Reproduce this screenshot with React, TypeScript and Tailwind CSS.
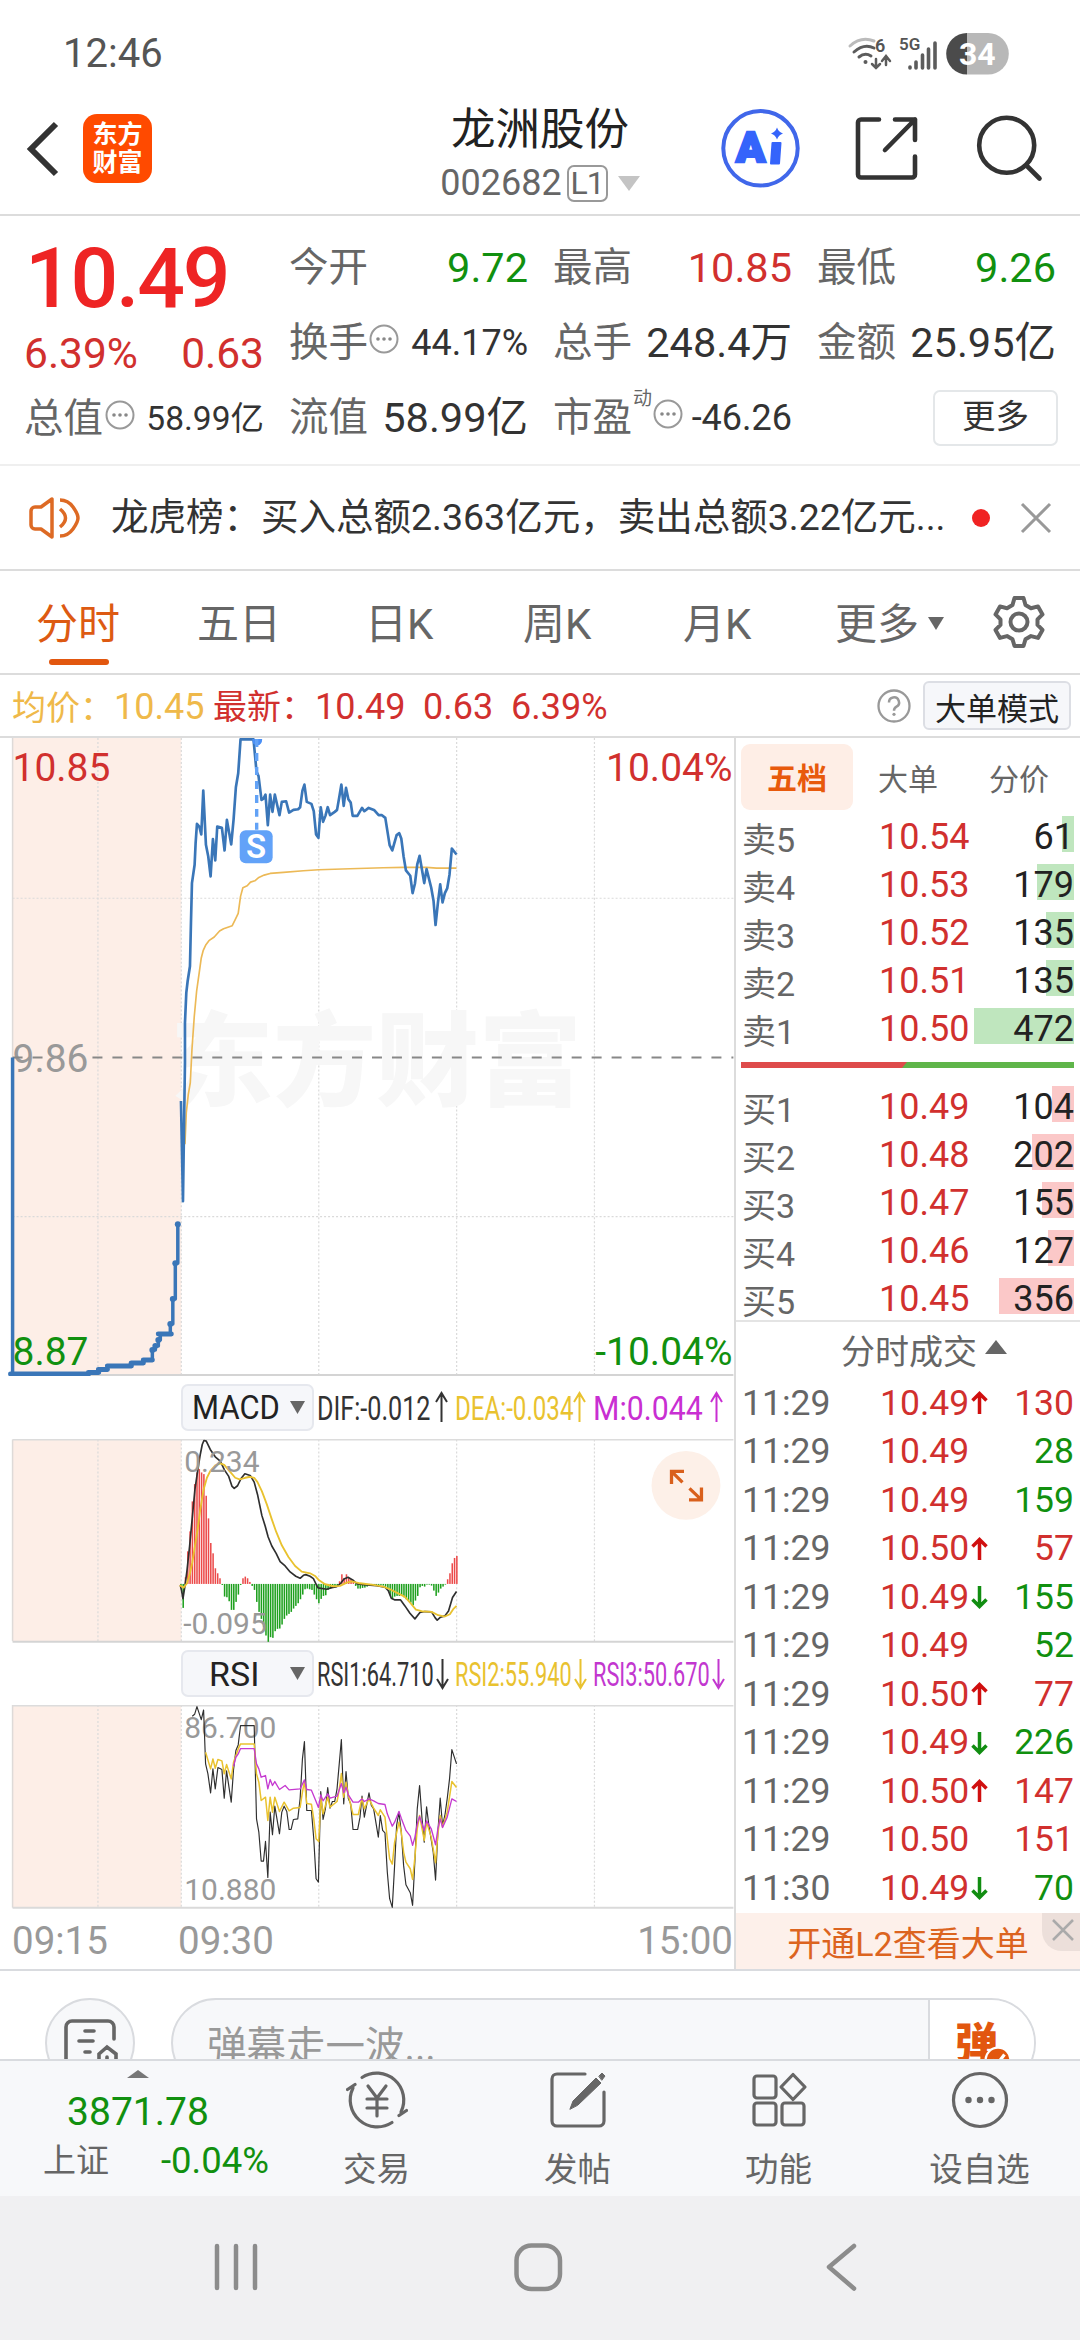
import { clsx } from "clsx";

const RED = "text-[#d1302e]";
const GREEN = "text-[#11900f]";

const stats = [
  { label: "今开", value: "9.72", color: GREEN },
  { label: "最高", value: "10.85", color: RED },
  { label: "最低", value: "9.26", color: GREEN },
  { label: "换手", value: "44.17%", tip: true, small: true },
  { label: "总手", value: "248.4万" },
  { label: "金额", value: "25.95亿" },
  { label: "流值", value: "58.99亿" },
  { label: "市盈", value: "-46.26", sup: "动", tip: true, small: true },
];

const sells = [
  { label: "卖5", price: "10.54", volume: 61, width: 12 },
  { label: "卖4", price: "10.53", volume: 179, width: 37 },
  { label: "卖3", price: "10.52", volume: 135, width: 28 },
  { label: "卖2", price: "10.51", volume: 135, width: 28 },
  { label: "卖1", price: "10.50", volume: 472, width: 100 },
];

const buys = [
  { label: "买1", price: "10.49", volume: 104, width: 22 },
  { label: "买2", price: "10.48", volume: 202, width: 42 },
  { label: "买3", price: "10.47", volume: 155, width: 32 },
  { label: "买4", price: "10.46", volume: 127, width: 26 },
  { label: "买5", price: "10.45", volume: 356, width: 75 },
];

const trades = [
  { time: "11:29", price: "10.49", dir: "up", volume: 130, buy: true },
  { time: "11:29", price: "10.49", dir: "", volume: 28, buy: false },
  { time: "11:29", price: "10.49", dir: "", volume: 159, buy: false },
  { time: "11:29", price: "10.50", dir: "up", volume: 57, buy: true },
  { time: "11:29", price: "10.49", dir: "down", volume: 155, buy: false },
  { time: "11:29", price: "10.49", dir: "", volume: 52, buy: false },
  { time: "11:29", price: "10.50", dir: "up", volume: 77, buy: true },
  { time: "11:29", price: "10.49", dir: "down", volume: 226, buy: false },
  { time: "11:29", price: "10.50", dir: "up", volume: 147, buy: true },
  { time: "11:29", price: "10.50", dir: "", volume: 151, buy: true },
  { time: "11:30", price: "10.49", dir: "down", volume: 70, buy: false },
];

// one bar per minute, 09:30 - 11:30
const macdBars = [
  -6, -72, 20, 98, 158, 248, 300, 335, 345, 335, 330, 265, 197, 123, 92, 47, 32, 17, -3, -38,
  -40, -52, -78, -78, -54, -32, -3, 17, 22, 17, 6, -6, -18, -54, -84, -105, -130, -155, -174, -160,
  -162, -142, -135, -134, -122, -105, -95, -90, -84, -74, -66, -58, -46, -32, -16, -14, -16, -18, -32, -46,
  -58, -45, -36, -34, -18, -14, -10, -10, -6, 8, 29, 18, 29, 18, 14, 6, -6, -14, -14, -12,
  -11, -8, -4, -3, -3, -3, -3, -3, -5, -8, -14, -34, -44, -38, -36, -36, -34, -40, -46, -50,
  -56, -64, -50, -36, -10, -6, -8, -2, -2, -5, -20, -36, -26, -14, -8, -2, 14, 32, 62, 78, 84,
];

const Tip = ({ className }: { className?: string }) => (
  <svg className={clsx("size-[30px] shrink-0", className)} viewBox="0 0 30 30">
    <circle cx="15" cy="15" r="13.5" fill="none" stroke="#999" strokeWidth="2" />
    <circle cx="9" cy="15" r="1.8" fill="#888" />
    <circle cx="15" cy="15" r="1.8" fill="#888" />
    <circle cx="21" cy="15" r="1.8" fill="#888" />
  </svg>
);

const LongArrow = ({ down }: { down?: boolean }) => (
  <svg className={clsx("h-[32px] w-[13px]", down && "rotate-180")} viewBox="0 0 13 32">
    <path d="M6.5 31V2M1 11L6.5 2L12 11" fill="none" stroke="currentColor" strokeWidth="2" />
  </svg>
);

const StatusBar = () => (
  <div className="flex h-[105px] items-start justify-between pl-[63px] pr-[71px] pt-[32px] text-[#555]">
    <span className="pt-px text-[40px] leading-[42px]">12:46</span>
    <svg className="h-[44px] w-[164px]" viewBox="845 31 164 44">
      <g fill="none" stroke="#5c5c5c" strokeWidth="3" strokeLinecap="round">
        <path d="M850 45q11-10 24-5" stroke="#bbb" />
        <path d="M854 51q10-9 20-4" />
        <path d="M859 56q6-5 12-1" />
        <path d="M876 58v9m-4-4l4 4l4-4M886 64v-8m-4 4l4-5l4 5" strokeWidth="2.5" />
        <path d="M910 66v1M916 61v6M922.500 54v13M928.500 48v19M935 42v25" strokeWidth="3.600" />
      </g>
      <circle cx="865.500" cy="61" r="2" fill="#5c5c5c" />
      <text x="875" y="51" fontSize="18" fontWeight="600" fill="#555">6</text>
      <text x="899" y="49" fontSize="17" fontWeight="600" fill="#555">5G</text>
      <path d="M967 32h21a20.800 20.800 0 0 1 0 41.600h-21z" fill="#b8b8b8" />
      <path d="M967 32a20.800 20.800 0 0 0 0 41.600z" fill="#4b4b4b" />
      <text x="959" y="64" fontSize="32" fontWeight="700" fill="#fff">34</text>
    </svg>
  </div>
);

const Header = () => (
  <div className="flex h-[111px] justify-between border-b-2 border-[#dcdcdc]">
    <div className="flex w-[370px] items-start pl-[26px] pt-[9px]">
      <svg className="mt-[7px] h-[56px] w-[34px]" viewBox="0 0 34 56">
        <path d="M30 3L5 28L30 53" fill="none" stroke="#333" strokeWidth="6" />
      </svg>
      <div className="ml-[23px] flex size-[69px] flex-col items-center justify-center rounded-[14px] bg-[#ff4a00] text-[25px] font-bold leading-[28px] text-white">
        <span>东方</span>
        <span>财富</span>
      </div>
    </div>
    <div className="flex flex-col items-center">
      <div className="text-[44.500px] leading-[50px] text-[#222]">龙洲股份</div>
      <div className="flex h-[56px] items-center text-[36px] text-[#666]">
        <span>002682</span>
        <span className="ml-[5px] flex h-[37px] w-[41px] items-center justify-center rounded-[7px] border-2 border-[#999] text-[32px] tracking-[-1px]">
          L1
        </span>
        <svg className="ml-[10px] h-[15px] w-[22px]" viewBox="0 0 22 15">
          <path d="M0 0h22L11 15z" fill="#c4c4c4" />
        </svg>
      </div>
    </div>
    <svg className="h-[90px] w-[370px]" viewBox="710 105 370 90">
      <circle cx="760.500" cy="148.300" r="37.200" fill="none" stroke="#4067ea" strokeWidth="4" />
      <text x="736" y="161.500" fontSize="43" fontWeight="900" fill="#3564fb" stroke="#3564fb" strokeWidth="2.500">A</text>
      <path d="M772.500 143h8l-1.500 20.500h-8z" fill="#3564fb" stroke="#3564fb" strokeWidth="2" strokeLinejoin="round" />
      <path d="M777 127.500q1.500 4.500 6 6q-4.500 1.500-6 6q-1.500-4.500-6-6q4.500-1.500 6-6z" fill="#3564fb" />
      <g fill="none" stroke="#333" strokeWidth="4.600" strokeLinecap="round" strokeLinejoin="round">
        <path d="M879 119.500h-18a3 3 0 0 0-3 3v52a3 3 0 0 0 3 3h51a3 3 0 0 0 3-3v-18" />
        <path d="M895 119.500h20v20.500M915 119.500L885 150" />
        <circle cx="1006.700" cy="145.300" r="27.500" />
        <path d="M1027 166l12.500 12.500" />
      </g>
    </svg>
  </div>
);

const Quote = () => (
  <div className="flex h-[250px] border-b-2 border-[#efefef] pl-[24px] pt-[14px] text-[#333]">
    <div className="flex w-[240px] flex-col">
      <div className="flex h-[97px] items-center pl-[1px] text-[84px] font-medium tracking-[-2.200px] text-[#ee2424]">
        10.49
      </div>
      <div className={clsx("flex h-[54px] items-center justify-between text-[42.500px]", RED)}>
        <span>6.39%</span>
        <span>0.63</span>
      </div>
      <div className="flex h-[75px] items-center">
        <span className="text-[39.500px] text-[#666]">总值</span>
        <Tip className="mb-[8px] ml-[2px]" />
        <span className="ml-auto text-[33.500px]">58.99亿</span>
      </div>
    </div>
    <div className="ml-[25px] grid h-[225px] w-[767px] grid-cols-[239px_239px_239px] grid-rows-3 gap-x-[25px]">
      {stats.map((s) => (
        <div key={s.label} className="flex items-center whitespace-nowrap">
          <span className="text-[39.500px] text-[#666]">{s.label}</span>
          {s.sup && <span className="mb-[38px] ml-[1px] w-[19px] text-[19px] text-[#666]">{s.sup}</span>}
          {s.tip && <Tip className="mb-[8px] ml-[1px]" />}
          <span className={clsx("ml-auto", s.small ? "text-[36px]" : "text-[41.500px]", s.color)}>
            {s.value}
          </span>
        </div>
      ))}
      <div className="flex items-center justify-end">
        <div className="mr-[-2px] flex h-[56px] w-[125px] items-center justify-center rounded-[7px] border-2 border-[#e4e7e9] pb-[2px] text-[33.500px]">
          更多
        </div>
      </div>
    </div>
  </div>
);

const News = () => (
  <div className="flex h-[105px] items-center border-b-2 border-[#dcdcdc] pl-[28px]">
    <svg className="h-[46px] w-[54px]" viewBox="28 494 54 46">
      <g fill="none" stroke="#dd6a24" strokeWidth="3.500" strokeLinejoin="round">
        <path d="M52 498v38L41 528h-6a4 4 0 0 1-4-4v-14a4 4 0 0 1 4-4h6z" />
        <path d="M60 508q11 9 0 18M60 499q8 0 13 7t5 11t-5 11t-13 7" />
      </g>
    </svg>
    <div className="ml-[29px] w-[837px] whitespace-nowrap pt-px text-[37.500px] text-[#333]">
      龙虎榜：买入总额2.363亿元，卖出总额3.22亿元...
    </div>
    <div className="ml-[24px] size-[18px] rounded-full bg-[#f02323]" />
    <svg className="ml-[30px] size-[32px]" viewBox="0 0 32 32">
      <path d="M2 2l28 28M30 2L2 30" stroke="#999" strokeWidth="3" />
    </svg>
  </div>
);

const Tabs = () => (
  <div className="flex h-[104px] items-center border-b-2 border-[#dcdcdc] pl-[36px] pt-[6px] text-[42px] text-[#666]">
    <div className="relative w-[161px] text-[#dd5a12]">
      分时
      <div className="absolute bottom-[-19px] left-[13px] h-[6px] w-[60px] rounded-full bg-[#e2570f]" />
    </div>
    <div className="w-[168px]">五日</div>
    <div className="w-[158px]">日K</div>
    <div className="w-[160px]">周K</div>
    <div className="w-[152px]">月K</div>
    <div>更多</div>
    <svg className="mb-[3px] ml-[9px] h-[13px] w-[16px]" viewBox="0 0 16 13">
      <path d="M0 0h16L8 13z" fill="#666" />
    </svg>
    <svg className="mb-[7px] ml-[48px] size-[54px]" viewBox="0 0 54 54">
      <g fill="none" stroke="#666" strokeWidth="4" strokeLinejoin="round">
        <path d="M22.500 3h9l2 7l5.500 3.200l7-1.800l4.500 8l-5 5v5.500l5 5l-4.500 8l-7-1.800l-5.500 3.200l-2 6.700h-9l-2-6.700l-5.500-3.200l-7 1.800l-4.500-8l5-5v-5.500l-5-5l4.500-8l7 1.800l5.500-3.200z" />
        <circle cx="27" cy="27" r="8.500" />
      </g>
    </svg>
  </div>
);

const PriceLegend = () => (
  <div className="flex h-[63px] items-center border-b-2 border-[#dcdcdc] pl-[12px] pr-[9px]">
    <span className="pt-[4px] text-[34px] text-[#efb94a]">均价：</span>
    <span className="w-[99px] pt-[3px] text-[36px] text-[#efb94a]">10.45</span>
    <div className={clsx("flex items-center pt-[3px]", RED)}>
      <span className="text-[34px]">最新：</span>
      <span className="w-[108px] text-[36px]">10.49</span>
      <span className="w-[88px] text-[36px]">0.63</span>
      <span className="text-[36px]">6.39%</span>
    </div>
    <svg className="ml-auto size-[34px]" viewBox="0 0 34 34">
      <circle cx="17" cy="17" r="15.500" fill="none" stroke="#999" strokeWidth="2.300" />
      <path d="M12 13.500a5 5 0 1 1 7.500 4.200q-2.500 1.500-2.500 4" fill="none" stroke="#999" strokeWidth="2.500" />
      <circle cx="17" cy="25.300" r="1.600" fill="#999" />
    </svg>
    <div className="ml-[12px] flex h-[49px] w-[148px] items-center justify-center rounded-[6px] border-2 border-[#dcdee4] bg-[#f6f7fa] pt-[7px] text-[31px] text-[#222]">
      大单模式
    </div>
  </div>
);

const Grid = ({ top, bottom }: { top: number; bottom: number }) => (
  <>
    <rect x="12" y={top} width="169" height={bottom - top} fill="#fdeee7" />
    {[97.5, 181, 318.7, 456.8, 594.8].map((x) => (
      <line key={x} x1={x} x2={x} y1={top} y2={bottom} stroke="#dadada" strokeWidth="1.2" strokeDasharray="2 2" />
    ))}
    <line x1="12" x2="12" y1={top} y2={bottom} stroke="#dedad8" strokeWidth="1.5" />
  </>
);

const PriceChart = () => (
  <svg className="block h-[639px] w-[734px]" viewBox="0 738 734 639">
    <Grid top={738} bottom={1376} />
    <text x="170" y="1099" fontSize="103" fontWeight="900" fill="#f7f7f7">东方财富</text>
    <path d="M12 898.500H734M12 1217.500H734" stroke="#dadada" strokeWidth="1.200" strokeDasharray="2 2" />
    <path d="M12 1376H734" stroke="#d4d4d4" strokeWidth="2" />
    <path d="M92 1058H734" stroke="#888" strokeWidth="2" strokeDasharray="10 10" />
    <text x="12" y="781" fontSize="39" fill="#d1302e">10.85</text>
    <text x="12" y="1073" fontSize="39" fill="#999">9.86</text>
    <text x="12" y="1366" fontSize="39" fill="#11900f">8.87</text>
    <text x="733" y="781" fontSize="39" fill="#d1302e" textAnchor="end">10.04%</text>
    <text x="733" y="1366" fontSize="39" fill="#11900f" textAnchor="end">-10.04%</text>
    <path d="M12 1058h10M32 1058h10" stroke="#888" strokeWidth="2" />
    <g fill="none" strokeLinejoin="round" transform="translate(170 730) scale(0.33333)">
      <polyline
        stroke="#ecb956"
        strokeWidth="5"
        points="44,1245 48,1150 54,1095 60,1060 65,960 72,860 79,785 86,735 93,685 99,662 107,645 116,633 132,622 148,604 160,597 186,588 195,570 204,551 211,500 218,474 231,468 241,457 254,453 266,443 282,436 300,431 340,428 400,423 446,420 540,417 640,414 700,413 770,413 800,415 860,415"
      />
      <polyline
        stroke="#3a76b8"
        strokeWidth="8"
        points="32,1115 38,1416 44,1000 44,880 48,790 52,755 59,710 62,580 65,460 73,405 76,340 80,282 87,290 93,314 99,182 107,345 114,380 121,440 128,328 135,392 141,290 155,294 163,362 170,270 183,344 190,270 197,172 204,130 211,28 250,28 259,125 265,138 274,210 280,206 286,194 293,286 300,194 307,246 314,194 328,256 335,216 348,214 357,248 370,240 384,238 390,232 397,182 403,164 410,216 424,222 431,244 438,314 445,324 452,232 459,276 466,258 473,232 480,256 494,246 501,240 508,200 514,164 521,228 528,174 535,208 542,218 548,258 562,258 576,234 583,244 596,234 612,240 626,256 636,256 646,264 659,346 667,362 680,316 688,310 694,326 701,380 708,422 721,438 728,490 735,462 742,404 749,378 763,460 770,418 784,474 791,514 797,586 804,520 811,464 818,518 825,490 832,476 839,434 846,356 860,374"
      />
    </g>
    <path
      fill="none"
      stroke="#3a76b8"
      strokeWidth="3.500"
      strokeLinejoin="round"
      d="M12 1058V1376H88V1373.500H99V1370.500H107V1367H130V1364H143V1361H152V1351H155V1347H158V1341H160V1335H170V1325H172.500V1300H175V1264H177.500V1225"
    />
    <path d="M10 1375H88M88 1373.500h10M98 1370.500h9M107 1367h24M131 1364h12M143 1361h9M158 1335h13" stroke="#3a76b8" strokeWidth="5" strokeLinecap="round" />
    {[[170, 1325], [172.5, 1300], [175, 1264], [177.5, 1225], [152, 1351], [155, 1347], [158, 1341]].map(([x, y]) => (
      <circle key={y} cx={x} cy={y} r="3" fill="#3a76b8" />
    ))}
    <path d="M252 739h10q0 6-5 6.500q-5-.5-5-6.500z" fill="#4a8ff5" />
    <path d="M256.500 739V830" stroke="#62a2f6" strokeWidth="3.400" strokeDasharray="8 6" />
    <rect x="239.500" y="830.500" width="33" height="33" rx="6" fill="#62a2f8" />
    <text x="256" y="858.500" fontSize="33" fontWeight="600" fill="#fff" textAnchor="middle">S</text>
  </svg>
);

const MacdChart = () => (
  <svg className="block h-[204px] w-[734px]" viewBox="0 1439.500 734 204">
    <Grid top={1440} bottom={1642} />
    <path d="M12 1440.300H734" stroke="#dcdcdc" strokeWidth="1.500" />
    <path d="M12 1642.500H734" stroke="#d4d4d4" strokeWidth="2" />
    <g transform="translate(170 1430) scale(0.33333)">
      {macdBars.map((v, i) => (
        <rect
          key={i}
          x={29.5 + i * 6.91}
          y={v > 0 ? 464 - v : 464}
          width="4.6"
          height={Math.abs(v)}
          fill={v > 0 ? "#ec4a4a" : "#1ea01e"}
        />
      ))}
      <g fill="none" strokeLinejoin="round">
        <polyline
          stroke="#2f2f2f"
          strokeWidth="5"
          points="30,468 34,485 38,508 44,470 50,425 58,350 66,265 74,180 82,125 90,75 96,45 101,33 108,35 120,60 135,82 150,95 163,122 175,140 185,170 192,177 202,169 212,148 224,133 240,138 252,158 262,195 275,258 285,290 294,323 305,350 318,372 330,397 345,410 360,428 377,441 390,447 400,438 407,436 420,441 430,448 438,465 444,476 470,480 485,475 500,472 512,462 522,449 534,444 548,452 560,463 580,466 620,469 645,474 655,484 664,507 675,512 692,512 705,530 720,552 735,569 750,550 765,547 785,548 796,566 802,573 812,564 825,560 836,545 848,505 860,487"
        />
        <polyline
          stroke="#e9c22f"
          strokeWidth="5.500"
          points="28,468 40,475 50,462 58,436 66,400 74,350 82,300 90,240 100,180 110,145 120,125 135,108 150,102 162,106 178,125 195,145 208,150 225,145 240,142 252,145 262,158 275,185 290,225 305,270 318,307 335,348 355,383 375,410 395,427 420,432 435,440 447,453 465,465 490,471 510,470 530,460 545,456 570,462 610,467 640,472 660,480 680,490 705,503 722,522 738,541 755,546 785,548 805,558 825,562 840,555 850,540 860,530"
        />
      </g>
    </g>
    <text x="184" y="1473" fontSize="30" fill="#999">0.234</text>
    <text x="183" y="1635" fontSize="30" fill="#999">-0.095</text>
    <circle cx="686.500" cy="1486" r="34.500" fill="#fdf0e8" />
    <path
      d="M672 1484.500V1472H684.500M672 1472L683 1483M702 1488V1500.500H689.500M702 1500.500L690 1489"
      fill="none"
      stroke="#d9601c"
      strokeWidth="3.300"
    />
  </svg>
);

const RsiChart = () => (
  <svg className="block h-[204px] w-[734px]" viewBox="0 1706 734 204">
    <Grid top={1706} bottom={1909} />
    <path d="M12 1706.800H734" stroke="#dcdcdc" strokeWidth="1.500" />
    <path d="M12 1909H734" stroke="#dadada" strokeWidth="2" />
    <text x="184" y="1739" fontSize="30" fill="#999">86.700</text>
    <text x="184" y="1901" fontSize="30" fill="#999">10.880</text>
    <g fill="none" strokeWidth="3.500" strokeLinejoin="round" transform="translate(170 1430) scale(0.33333)">
      <polyline
        stroke="#2f2f2f"
        points="66,862 73,856 80,833 93,872 100,843 106,1005 113,1035 121,1092 128,1020 135,1080 143,1016 155,1022 162,1108 169,1026 183,1120 190,1022 197,965 204,948 211,890 252,890 259,1170 266,1210 273,1297 280,1297 286,1238 293,1346 300,1150 307,1218 314,1132 328,1215 335,1150 342,1132 350,1148 357,1202 363,1202 370,1172 383,1170 390,1110 397,990 403,938 410,1145 424,1145 431,1230 438,1350 445,1360 452,1088 459,1172 466,1140 473,1076 480,1138 487,1118 494,1118 501,1080 514,932 521,1125 528,1028 535,1110 542,1125 549,1202 563,1202 570,1165 576,1102 583,1165 597,1092 604,1130 611,1140 625,1225 631,1160 638,1205 645,1212 652,1330 659,1410 667,1436 674,1310 680,1190 687,1150 694,1210 701,1310 708,1368 721,1392 728,1430 735,1295 742,1140 749,1070 756,1165 763,1240 770,1134 777,1190 790,1270 797,1354 804,1210 811,1108 818,1190 825,1160 832,1110 839,1050 846,962 860,1005"
      />
      <polyline
        stroke="#e9c22f"
        strokeWidth="4.500"
        points="106,970 121,1020 128,990 135,1018 143,992 155,996 162,1035 169,1007 183,1050 190,1000 204,960 211,945 252,945 259,1035 266,1060 273,1115 286,1105 293,1175 300,1105 307,1150 314,1105 328,1148 342,1120 357,1146 370,1138 390,1136 397,1090 403,1058 410,1124 424,1126 431,1170 438,1230 446,1238 452,1105 459,1155 473,1105 480,1135 501,1118 508,1080 514,1034 521,1105 528,1060 535,1100 549,1157 565,1157 576,1108 583,1140 597,1110 611,1138 625,1160 631,1143 645,1165 652,1230 659,1290 667,1306 674,1240 687,1180 694,1210 701,1270 708,1300 721,1320 728,1352 735,1285 742,1200 749,1160 763,1235 770,1180 784,1225 797,1302 804,1215 811,1160 818,1195 832,1150 846,1058 860,1076"
      />
      <polyline
        stroke="#c53ad0"
        strokeWidth="4"
        points="190,1012 197,985 204,975 211,959 252,959 259,1005 266,1020 273,1045 286,1040 293,1080 300,1052 307,1070 314,1058 328,1082 345,1070 357,1083 390,1080 403,1053 410,1082 424,1084 438,1118 445,1136 452,1098 459,1116 473,1095 480,1108 501,1102 514,1064 521,1092 528,1075 535,1098 549,1120 565,1120 576,1110 583,1118 597,1110 611,1116 625,1124 645,1127 652,1155 667,1192 674,1180 687,1148 694,1168 708,1205 721,1222 728,1250 735,1225 742,1185 749,1163 763,1205 770,1176 784,1200 797,1248 804,1200 811,1170 818,1196 832,1165 846,1110 860,1118"
      />
    </g>
  </svg>
);

type Indicator = { text: string; color: string; scale: string; width: string; down?: boolean };

const macdValues: Indicator[] = [
  { text: "DIF:-0.012", color: "text-[#333]", scale: "scale-x-[.74]", width: "w-[118px]" },
  { text: "DEA:-0.034", color: "text-[#e9c22f]", scale: "scale-x-[.71]", width: "w-[118px]" },
  { text: "M:0.044", color: "text-[#c92fd2]", scale: "scale-x-[.89]", width: "w-[117px]" },
];

const rsiValues: Indicator[] = [
  { text: "RSI1:64.710", color: "text-[#333]", scale: "scale-x-[.64]", width: "w-[119px]", down: true },
  { text: "RSI2:55.940", color: "text-[#e9c22f]", scale: "scale-x-[.64]", width: "w-[119px]", down: true },
  { text: "RSI3:50.670", color: "text-[#c237cf]", scale: "scale-x-[.64]", width: "w-[119px]", down: true },
];

const IndicatorRow = ({ name, nameClass, values }: { name: string; nameClass: string; values: Indicator[] }) => (
  <div className="flex h-[63px] items-center pl-[181px] text-[34px]">
    <div className="flex h-[47px] w-[133px] shrink-0 items-center rounded-[7px] border-2 border-[#e6e8ee] bg-[#f6f7fa] text-[#222]">
      <span className={clsx("w-[107px] origin-left", nameClass)}>{name}</span>
      <svg className="h-[13px] w-[15px]" viewBox="0 0 15 13">
        <path d="M0 0h15L7.500 13z" fill="#666" />
      </svg>
    </div>
    <div className="ml-[3px] flex">
      {values.map((v) => (
        <div key={v.text} className={clsx("flex w-[138px] items-center", v.color)}>
          <div className={clsx("shrink-0", v.width)}>
            <span className={clsx("block w-max origin-left pt-px", v.scale)}>{v.text}</span>
          </div>
          <LongArrow down={v.down} />
        </div>
      ))}
    </div>
  </div>
);

const Charts = () => (
  <div className="flex w-[734px] shrink-0 flex-col">
    <PriceChart />
    <IndicatorRow name="MACD" nameClass="pl-[10px] scale-x-[.91]" values={macdValues} />
    <MacdChart />
    <IndicatorRow name="RSI" nameClass="pl-[26px]" values={rsiValues} />
    <RsiChart />
    <div className="flex h-[60px] items-center pl-[12px] pr-[1px] pt-[5px] text-[38.500px] text-[#999]">
      <span className="w-[166px]">09:15</span>
      <span>09:30</span>
      <span className="ml-auto">15:00</span>
    </div>
  </div>
);

const OrderRow = ({ row, bar }: { row: (typeof sells)[number]; bar: string }) => (
  <div className="relative flex h-[48px] items-center pl-[6px] pr-[6px] text-[36px]">
    <div className={clsx("absolute right-[6px] top-[6px] h-[36px]", bar)} style={{ width: row.width }} />
    <span className="w-[137px] pt-[12px] text-[34px] text-[#666]">{row.label}</span>
    <span className={clsx("pt-[5px]", RED)}>{row.price}</span>
    <span className="relative ml-auto pt-[5px] text-[#222]">{row.volume}</span>
  </div>
);

const OrderBook = () => (
  <div className="flex flex-1 flex-col border-l-2 border-[#dcdcdc]">
    <div className="flex h-[72px] items-start pl-[5px] pt-[6px] text-[30px] text-[#666]">
      <div className="flex h-[66px] w-[112px] items-center justify-center rounded-[9px] bg-[#feeee6] pt-[4px] font-bold text-[#e85a0c]">五档</div>
      <div className="flex h-[66px] w-[110px] items-center justify-center pt-[5px]">大单</div>
      <div className="flex h-[66px] w-[112px] items-center justify-center pt-[5px]">分价</div>
    </div>
    {sells.map((row) => (
      <OrderRow key={row.label} row={row} bar="bg-[#bfe6be]" />
    ))}
    <div className="mb-[12px] ml-[5px] mr-[6px] mt-[12px] flex h-[6px] bg-[#5fb54a]">
      <div className="w-[166px] bg-[#de4b4b] [clip-path:polygon(0_0,100%_0,97%_100%,0_100%)]" />
    </div>
    {buys.map((row) => (
      <OrderRow key={row.label} row={row} bar="bg-[#fbc8c8]" />
    ))}
    <div className="flex h-[59px] items-center justify-center border-t-2 border-[#e4e4e4] pl-[32px] pt-[2px] text-[34px] text-[#666]">
      分时成交
      <svg className="mb-[10px] ml-[8px] h-[14px] w-[22px]" viewBox="0 0 22 14">
        <path d="M0 14h22L11 0z" fill="#666" />
      </svg>
    </div>
    {trades.map((t, i) => (
      <div key={i} className="flex h-[48.500px] items-center pl-[6px] pr-[6px] text-[35.500px]">
        <span className="w-[138px] text-[#666]">{t.time}</span>
        <span className={RED}>{t.price}</span>
        {t.dir && (
          <svg className={clsx("ml-[2px] h-[24px] w-[17px]", t.dir === "down" && "rotate-180")} viewBox="0 0 17 24">
            <path
              d="M8.500 23V3M1.500 9.500l7-7l7 7"
              fill="none"
              stroke={t.dir === "up" ? "#d00f0f" : "#118d11"}
              strokeWidth="3.500"
            />
          </svg>
        )}
        <span className={clsx("ml-auto", t.buy ? RED : GREEN)}>{t.volume}</span>
      </div>
    ))}
    <div className="relative flex flex-1 items-center justify-center bg-[#fdf0ea] pt-[6px] text-[34px] text-[#dc641f]">
      开通L2查看大单
      <div className="absolute right-0 top-0 flex h-[38px] w-[38px] items-center justify-center rounded-bl-[20px] bg-[#ecdfda]">
        <svg className="ml-[4px] mt-[-3px] size-[22px]" viewBox="0 0 22 22">
          <path d="M1 1l20 20M21 1L1 21" stroke="#aaa" strokeWidth="2.500" />
        </svg>
      </div>
    </div>
  </div>
);

const Danmaku = () => (
  <div className="flex h-[88px] items-start overflow-hidden pl-[45px] pt-[27px]">
    <div className="flex size-[90px] shrink-0 items-center justify-center rounded-full border-2 border-[#d9dbdf] bg-[#f7f8fa]">
      <svg className="size-[56px]" viewBox="0 0 56 56">
        <g fill="none" stroke="#666" strokeWidth="3.600" strokeLinecap="round">
          <path d="M52 24V12a6 6 0 0 0-6-6H10a6 6 0 0 0-6 6v32a6 6 0 0 0 6 6h22" />
          <path d="M23 16h9M17 26h14M23 37h5" />
          <path d="M37 50V39l8-7l9 7v11M45 42v6" />
        </g>
      </svg>
    </div>
    <div className="ml-[36px] flex h-[90px] w-[865px] shrink-0 overflow-hidden rounded-full border-2 border-[#d9dbdf] bg-[#f7f8fa]">
      <div className="flex w-[755px] items-center pl-[34px] pt-[7px] text-[39.500px] text-[#999]">弹幕走一波...</div>
      <div className="relative flex flex-1 items-center border-l-2 border-[#d9dbdf] bg-white pl-[25px] pt-[2px] text-[43px] font-black text-[#e2570f]">
        弹
        <svg className="absolute left-[54px] top-[46px] size-[28px]" viewBox="0 0 26 26">
          <circle cx="13" cy="13" r="11.500" fill="#e2570f" stroke="#fff" strokeWidth="2" />
          <path d="M8 13l4 4l7-9" fill="none" stroke="#fff" strokeWidth="3" />
        </svg>
      </div>
    </div>
  </div>
);

const navItems = [
  {
    label: "交易",
    icon: (
      <>
        <path d="M16 8.500A27 27 0 0 1 55 43M46 53.500A27 27 0 0 1 7 19" />
        <path d="M1.500 20.500L9 15.500M60.500 41.500L53 46.500" />
        <path d="M22 17l9 12l9-12M21 30h20M21 39h20M31 29v18" />
      </>
    ),
  },
  {
    label: "发帖",
    icon: (
      <>
        <path d="M38 5H10a5 5 0 0 0-5 5v42a5 5 0 0 0 5 5h42a5 5 0 0 0 5-5V23" />
        <path d="M23 40l3-8L49 9l5 5L31 36z" fill="#666" strokeWidth="1" />
        <path d="M52 7l3-3l3 3l-3 4z" fill="#666" strokeWidth="1" />
      </>
    ),
  },
  {
    label: "功能",
    icon: (
      <>
        <rect x="6" y="7" width="22" height="22" rx="3" />
        <rect x="6" y="34" width="22" height="22" rx="3" />
        <rect x="34" y="34" width="22" height="22" rx="3" />
        <path d="M45 5.500L57 18L45 30.500L33 18z" />
      </>
    ),
  },
  {
    label: "设自选",
    icon: (
      <>
        <circle cx="31" cy="31" r="26.500" />
        <circle cx="19.500" cy="31" r="1.600" fill="#666" />
        <circle cx="31" cy="31" r="1.600" fill="#666" />
        <circle cx="42.500" cy="31" r="1.600" fill="#666" />
      </>
    ),
  },
];

const TabBar = () => (
  <div className="flex h-[137px] border-t-2 border-[#d9dbdf] bg-[#f7f8fa] text-[#666]">
    <div className="flex w-[276px] flex-col items-center pt-[9px]">
      <svg className="h-[8px] w-[22px]" viewBox="0 0 22 8">
        <path d="M0 8h22L11 0z" fill="#777" />
      </svg>
      <span className={clsx("mt-[14px] text-[39px] leading-[40px]", GREEN)}>3871.78</span>
      <div className="mt-[7px] flex w-full items-center justify-between pl-[43px] pr-[7px]">
        <span className="text-[33px] leading-[44px]">上证</span>
        <span className={clsx("text-[36.500px] leading-[44px]", GREEN)}>-0.04%</span>
      </div>
    </div>
    {navItems.map((n) => (
      <div key={n.label} className="flex w-[201px] shrink-0 flex-col items-center pt-[8px]">
        <svg className="size-[62px]" viewBox="0 0 62 62" fill="none" stroke="#666" strokeWidth="3.2" strokeLinecap="round" strokeLinejoin="round">
          {n.icon}
        </svg>
        <span className="mt-[17px] text-[33.500px] leading-[44px]">{n.label}</span>
      </div>
    ))}
  </div>
);

const SystemNav = () => (
  <div className="h-[144px] bg-[#f0f0f2]">
    <svg className="h-[144px] w-[1080px]" viewBox="0 2196 1080 144">
      <g fill="none" stroke="#8c8c8c" strokeWidth="4.500" strokeLinecap="round" strokeLinejoin="round">
        <path d="M217 2246v42M236 2246v42M255 2246v42" />
        <rect x="516.500" y="2245.500" width="43.500" height="43.500" rx="15" />
        <path d="M854 2246L829 2267L854 2288.500" />
      </g>
    </svg>
  </div>
);

const App = () => (
  <div className="flex h-[2340px] w-[1080px] flex-col overflow-hidden bg-white font-[Roboto,'Noto_Sans_CJK_SC',sans-serif] leading-none">
    <StatusBar />
    <Header />
    <Quote />
    <News />
    <Tabs />
    <PriceLegend />
    <div className="flex h-[1233px] border-b-2 border-[#d9dbdf]">
      <Charts />
      <OrderBook />
    </div>
    <Danmaku />
    <TabBar />
    <SystemNav />
  </div>
);

export default App;
